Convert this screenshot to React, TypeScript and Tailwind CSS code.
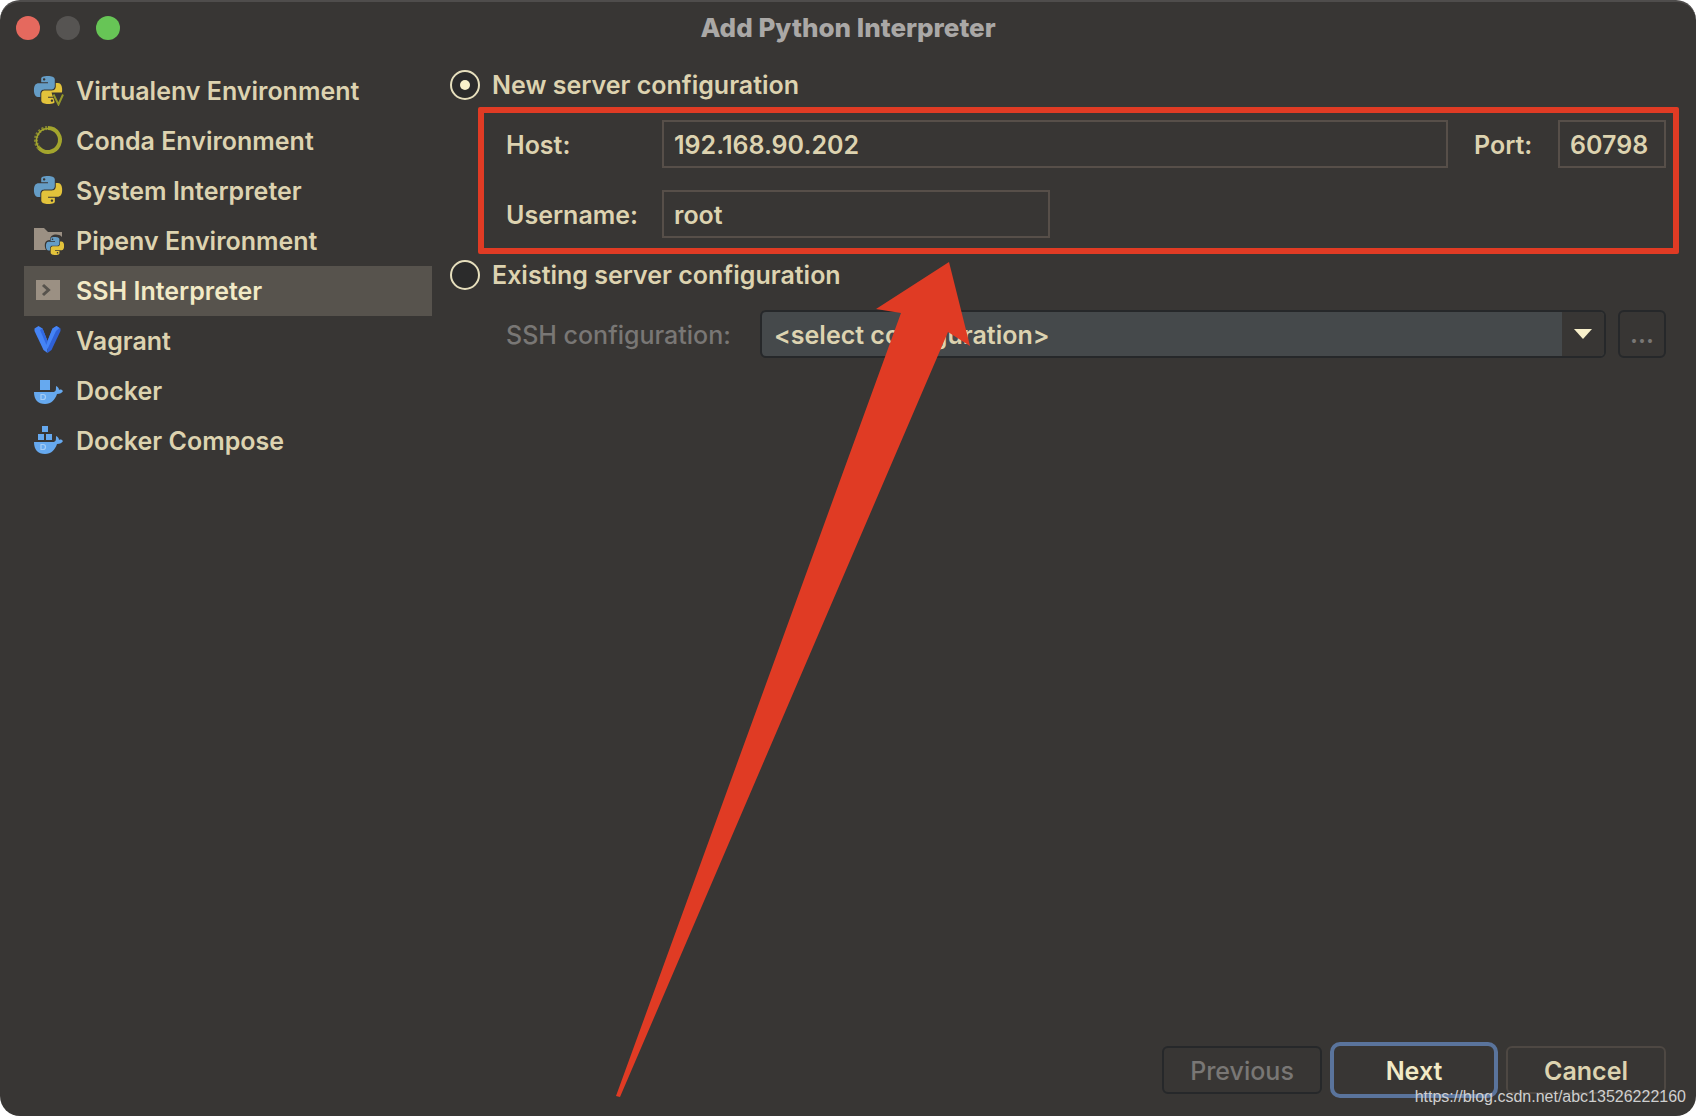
import { ReactNode, useState } from "react";

enum ServerMode {
  NEW = "new",
  EXISTING = "existing"
}

interface IconProps {
  className?: string;
}

function PythonShape({ transform }: { transform: string }) {
  return (
    <g transform={transform}>
      <path fill="#659dc6" d="M14.25.18l.9.2.73.26.59.3.45.32.34.34.25.34.16.33.1.3.04.26.02.2-.01.13V8.5l-.05.63-.13.55-.21.46-.26.38-.3.31-.33.25-.35.19-.35.14-.33.1-.3.07-.26.04-.21.02H8.77l-.69.05-.59.14-.5.22-.41.27-.33.32-.27.35-.2.36-.15.37-.1.35-.07.32-.04.27-.02.21v3.06H3.17l-.21-.03-.28-.07-.32-.12-.35-.18-.36-.26-.36-.36-.35-.46-.32-.59-.28-.73-.21-.88-.14-1.05-.05-1.23.06-1.22.16-1.04.24-.87.32-.71.36-.57.4-.44.42-.33.42-.24.4-.16.36-.1.32-.05.24-.01h.16l.06.01h8.16v-.83H6.18l-.01-2.75-.02-.37.05-.34.11-.31.17-.28.25-.26.31-.23.38-.2.44-.18.51-.15.58-.12.64-.1.71-.06.77-.04.84-.02 1.27.05zm-6.3 1.98l-.23.33-.08.41.08.41.23.34.33.22.41.09.41-.09.33-.22.23-.34.08-.41-.08-.41-.23-.33-.33-.22-.41-.09-.41.09z" />
      <path fill="#e3c33b" d="M21.1 6.11l.28.06.32.12.35.18.36.27.36.35.35.47.32.59.28.73.21.88.14 1.04.05 1.23-.06 1.23-.16 1.04-.24.86-.32.71-.36.57-.4.45-.42.33-.42.24-.4.16-.36.09-.32.05-.24.02-.16-.01h-8.22v.82h5.84l.01 2.76.02.36-.05.34-.11.31-.17.29-.25.25-.31.24-.38.2-.44.17-.51.15-.58.13-.64.09-.71.07-.77.04-.84.01-1.27-.04-1.07-.14-.9-.2-.73-.25-.59-.3-.45-.33-.34-.34-.25-.34-.16-.33-.1-.3-.04-.25-.02-.2.01-.13v-5.34l.05-.64.13-.54.21-.46.26-.38.3-.32.33-.24.35-.2.35-.14.33-.1.3-.06.26-.04.21-.02.13-.01h5.84l.69-.05.59-.14.5-.21.41-.28.33-.32.27-.35.2-.36.15-.36.1-.35.07-.32.04-.28.02-.21V6.07h2.09l.14.01zm-6.47 14.25l-.23.33-.08.41.08.41.23.33.33.23.41.08.41-.08.33-.23.23-.33.08-.41-.08-.41-.23-.33-.33-.23-.41-.08-.41.08z" />
    </g>
  );
}

function PythonIcon({ className }: IconProps) {
  return (
    <svg className={className} viewBox="0 0 32 32" aria-hidden="true">
      <PythonShape transform="translate(2 2) scale(1.1667)" />
    </svg>
  );
}

function VirtualenvIcon({ className }: IconProps) {
  return (
    <svg className={className} viewBox="0 0 32 32" aria-hidden="true">
      <PythonShape transform="translate(2 2) scale(1.1667)" />
      <path d="M19.500 18.500H32V32h-8z" fill="#383634" />
      <path d="M21.500 20.500l5 10 4.500-10" fill="none" stroke="#94972a" strokeWidth="2" />
    </svg>
  );
}

function CondaIcon({ className }: IconProps) {
  return (
    <svg className={className} viewBox="0 0 32 32" fill="none" stroke="#a3a52d" aria-hidden="true">
      <path d="M16 4a12 12 0 1 1-9 20" strokeWidth="4" />
      <path d="M7.500 24.500A12 12 0 0 1 16 4.500" strokeWidth="1.500" />
      <path d="M7 24A12 12 0 0 1 16 4" strokeWidth="4" strokeDasharray="2 1.500" opacity=".7" />
    </svg>
  );
}

function PipenvIcon({ className }: IconProps) {
  return (
    <svg className={className} viewBox="0 0 32 32" aria-hidden="true">
      <path d="M2 4h10l4 4h14v5c-4-4-12-3-12 3-6 0-6 6-4 10H2z" fill="#9b9083" />
      <PythonShape transform="translate(14 13) scale(.75)" />
    </svg>
  );
}

function SshIcon({ className }: IconProps) {
  return (
    <svg className={className} viewBox="0 0 32 32" aria-hidden="true">
      <path d="M4 6h24v20H4z" fill="#9b9083" />
      <path d="M11 11l5.500 5-5.500 5" fill="none" stroke="#57534d" strokeWidth="3" />
    </svg>
  );
}

function VagrantIcon({ className }: IconProps) {
  return (
    <svg className={className} viewBox="0 0 32 32" aria-hidden="true">
      <path d="M2.500 4.500l4-2.500 4 2.500L15.500 17v12l-4-3L2.500 7z" fill="#4584f5" />
      <path d="M28.500 4.500L24.500 2l-4 2.500L15.500 17v12l4-3 9-19z" fill="#2f61d6" />
      <path d="M20.500 4.500l4-2.500 3 2-3.500 3-8.500 18-3-5 3-3z" fill="#4584f5" />
      <path d="M8 6l2.500-1.500 5 12.500-1 4z" fill="#3168e0" />
    </svg>
  );
}

function DockerHull() {
  return (
    <>
      <path d="M2 18h20c2-1 2-2 2-6 2 1 3 2 3 4 2-1 3 0 4 1-1 2-3 3-6 3-2 6-6 10-12 10C6 30 2 26 2 18z" fill="#66a9ef" />
      <path d="M9 20.500h2a2.500 2.500 0 0 1 0 5H9z" fill="none" stroke="#a5cdf6" strokeWidth="1.200" />
    </>
  );
}

function DockerIcon({ className }: IconProps) {
  return (
    <svg className={className} viewBox="0 0 32 32" aria-hidden="true">
      <path d="M8 6h10v10H8z" fill="#66a9ef" />
      <DockerHull />
    </svg>
  );
}

function DockerComposeIcon({ className }: IconProps) {
  return (
    <svg className={className} viewBox="0 0 32 32" aria-hidden="true">
      <path d="M10 2h6v6h-6zM6 10h6v6H6zM14 10h6v6h-6z" fill="#66a9ef" />
      <DockerHull />
    </svg>
  );
}

const environments = [
  { label: "Virtualenv Environment", Icon: VirtualenvIcon },
  { label: "Conda Environment", Icon: CondaIcon },
  { label: "System Interpreter", Icon: PythonIcon },
  { label: "Pipenv Environment", Icon: PipenvIcon },
  { label: "SSH Interpreter", Icon: SshIcon },
  { label: "Vagrant", Icon: VagrantIcon },
  { label: "Docker", Icon: DockerIcon },
  { label: "Docker Compose", Icon: DockerComposeIcon }
];

interface ModeRadioProps {
  value: ServerMode;
  current: ServerMode;
  onSelect: (value: ServerMode) => void;
  children: ReactNode;
}

function ModeRadio({ value, current, onSelect, children }: ModeRadioProps) {
  return (
    <label className="flex items-center gap-3 h-[30px]">
      <span className="relative flex size-[30px] shrink-0">
        <input
          type="radio"
          name="mode"
          value={value}
          checked={current === value}
          onChange={() => onSelect(value)}
          className="peer size-full appearance-none rounded-full border-2 border-[#e6dfbd] bg-[#2b2b2b]"
        />
        <span className="hidden peer-checked:block absolute inset-0 m-auto size-[10px] rounded-full bg-[#f8f0cb]" />
      </span>
      <span>{children}</span>
    </label>
  );
}

const fieldStyle = "h-12 border-2 border-[#574f49] bg-transparent px-[10px] pt-0.5 outline-none";

export default function App() {
  const [selected, setSelected] = useState("SSH Interpreter");
  const [mode, setMode] = useState(ServerMode.NEW);
  const [host, setHost] = useState("192.168.90.202");
  const [port, setPort] = useState("60798");
  const [username, setUsername] = useState("root");

  return (
    <div className="bg-white">
      <div className="relative flex flex-col min-h-screen overflow-hidden rounded-[20px] border-t-2 border-[#4f4d4c] bg-[#383634] font-['Inter',sans-serif] text-[25px] leading-[30px] font-semibold text-[#ddd3b0]">
        <header className="grid grid-cols-[1fr_auto_1fr] items-center h-[52px] px-4">
          <div className="flex gap-4">
            <button type="button" aria-label="Close" className="size-6 rounded-full bg-[#e5695e]" />
            <button type="button" aria-label="Minimize" className="size-6 rounded-full bg-[#565452]" />
            <button type="button" aria-label="Zoom" className="size-6 rounded-full bg-[#67c556]" />
          </div>
          <h1 className="text-[26px] font-extrabold text-[#aaa8a6]">Add Python Interpreter</h1>
        </header>

        <div className="flex flex-1 gap-[18px] pl-6 pr-[30px]">
          <nav className="w-[408px] shrink-0 pt-3">
            {environments.map(({ label, Icon }) => (
              <button
                key={label}
                type="button"
                onClick={() => setSelected(label)}
                className={`flex items-center gap-3 w-full h-[50px] px-2 text-left ${selected === label ? "bg-[#57534d] text-[#f2eac6]" : ""}`}
              >
                <Icon className="size-8 shrink-0 mb-0.5" />
                <span>{label}</span>
              </button>
            ))}
          </nav>

          <main className="flex-1 min-w-0 pt-4">
            <ModeRadio value={ServerMode.NEW} current={mode} onSelect={setMode}>New server configuration</ModeRadio>

            <div className="flex flex-col gap-[22px] mt-[7px] mb-1.5 ml-7 -mr-[13px] rounded-xs border-6 border-[#e03b24] pt-[7px] pb-[10px] pl-[22px] pr-[7px]">
              <div className="flex items-center">
                <label htmlFor="host" className="w-[156px] shrink-0 pt-0.5">Host:</label>
                <input id="host" value={host} onChange={(e) => setHost(e.target.value)} className={`${fieldStyle} flex-1 min-w-0`} />
                <label htmlFor="port" className="w-[110px] shrink-0 pt-0.5 pl-[26px]">Port:</label>
                <input id="port" value={port} onChange={(e) => setPort(e.target.value)} className={`${fieldStyle} w-[108px]`} />
              </div>
              <div className="flex items-center">
                <label htmlFor="username" className="w-[156px] shrink-0 pt-0.5">Username:</label>
                <input id="username" value={username} onChange={(e) => setUsername(e.target.value)} className={`${fieldStyle} w-[388px]`} />
              </div>
            </div>

            <ModeRadio value={ServerMode.EXISTING} current={mode} onSelect={setMode}>Existing server configuration</ModeRadio>

            <div className="flex items-center mt-5 pl-14">
              <label htmlFor="ssh" className="w-[254px] shrink-0 pt-0.5 font-medium text-[#797775]">SSH configuration:</label>
              <div className="relative flex-1 min-w-0 h-12">
                <select id="ssh" className="size-full appearance-none rounded-md border-2 border-[#26282a] bg-[#45494b] px-3 pt-0.5 outline-none">
                  <option>&lt;select configuration&gt;</option>
                </select>
                <span className="pointer-events-none absolute inset-y-0.5 right-0.5 flex w-[42px] items-center justify-center rounded-r-sm bg-[#383634]">
                  <svg className="w-[18px] h-[10px]" viewBox="0 0 18 10" aria-hidden="true">
                    <path d="M0 0h18L9 10z" fill="#f8f0cb" />
                  </svg>
                </span>
              </div>
              <button type="button" aria-label="Browse" disabled className="ml-3 flex size-12 items-center justify-center rounded-md border-2 border-[#26282a] text-[#797775]">...</button>
            </div>
          </main>
        </div>

        <footer className="flex items-center justify-end gap-2 h-14 mb-[18px] pr-[30px]">
          <button type="button" disabled className="w-40 h-12 rounded-md border-2 border-[#26282a] pt-0.5 font-medium text-[#797775]">Previous</button>
          <button type="button" className="w-[168px] h-14 rounded-[10px] border-4 border-[#5a749c] pt-0.5 text-[#f2eac6]">Next</button>
          <button type="button" className="w-40 h-12 rounded-md border-2 border-[#4e4843] pt-0.5">Cancel</button>
        </footer>

        {/* arrow pointing at the highlighted fields */}
        <svg className="pointer-events-none absolute left-[616px] top-[260px] w-[354px] h-[836px]" viewBox="0 0 354 836" aria-hidden="true">
          <path d="M333 0L354 84L332 70L4 835L0 834L285 51L260 47Z" fill="#e03b24" />
        </svg>

        <a href="https://blog.csdn.net/abc13526222160" className="absolute right-[10px] bottom-[9px] font-['Liberation_Sans',sans-serif] text-[16px] leading-5 font-normal text-[#cfcfcf]">https://blog.csdn.net/abc13526222160</a>
      </div>
    </div>
  );
}
